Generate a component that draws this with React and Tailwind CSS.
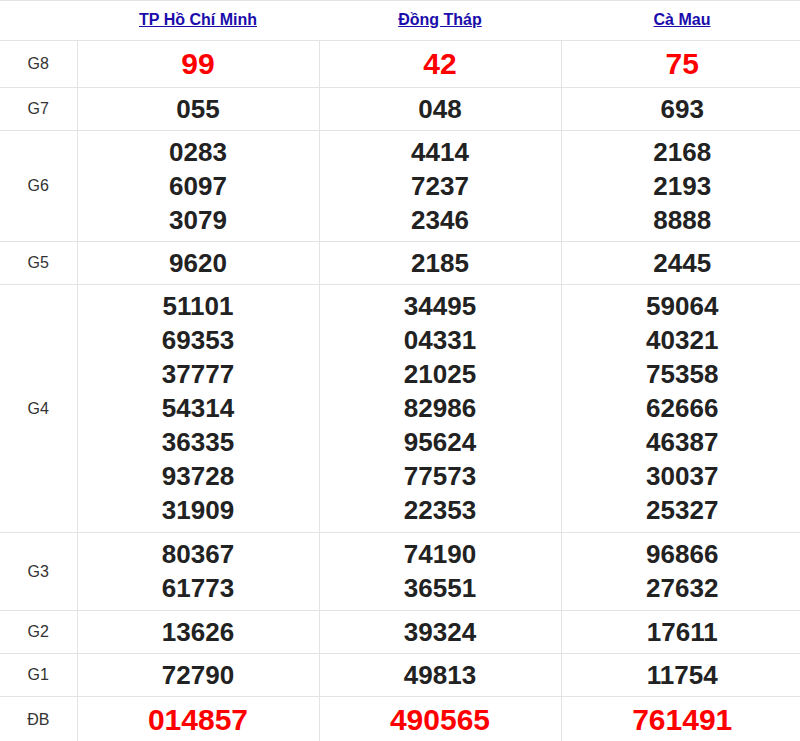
import React from "react";

const provinces = ["TP Hồ Chí Minh", "Đồng Tháp", "Cà Mau"];

const prizes = [
  { label: "G8", red: true, values: [["99"], ["42"], ["75"]] },
  { label: "G7", values: [["055"], ["048"], ["693"]] },
  {
    label: "G6",
    values: [
      ["0283", "6097", "3079"],
      ["4414", "7237", "2346"],
      ["2168", "2193", "8888"],
    ],
  },
  { label: "G5", values: [["9620"], ["2185"], ["2445"]] },
  {
    label: "G4",
    tall: true,
    values: [
      ["51101", "69353", "37777", "54314", "36335", "93728", "31909"],
      ["34495", "04331", "21025", "82986", "95624", "77573", "22353"],
      ["59064", "40321", "75358", "62666", "46387", "30037", "25327"],
    ],
  },
  {
    label: "G3",
    tall: true,
    values: [
      ["80367", "61773"],
      ["74190", "36551"],
      ["96866", "27632"],
    ],
  },
  { label: "G2", values: [["13626"], ["39324"], ["17611"]] },
  { label: "G1", values: [["72790"], ["49813"], ["11754"]] },
  { label: "ĐB", red: true, values: [["014857"], ["490565"], ["761491"]] },
];

export default function App() {
  return (
    <div className="w-[800px] h-[741px] overflow-hidden bg-white font-['Liberation_Sans',Arial,sans-serif]">
      <table className="w-[803px] table-fixed border-collapse">
        <colgroup>
          <col className="w-[77px]" />
          <col className="w-[242px]" />
          <col className="w-[242px]" />
          <col className="w-[242px]" />
        </colgroup>
        <thead>
          <tr className="h-[40px] border-t border-b border-[#e3e3e3]">
            <th></th>
            {provinces.map((p) => (
              <th key={p} className="text-center align-middle pb-[1px]">
                <a
                  href="#"
                  className="text-[16px] font-bold text-[#1a0dab] underline"
                >
                  {p}
                </a>
              </th>
            ))}
          </tr>
        </thead>
        <tbody>
          {prizes.map((row) => (
            <tr key={row.label} className="border-b border-[#e3e3e3]">
              <td className="text-center align-middle text-[16px] text-[#333]">
                {row.label}
              </td>
              {row.values.map((nums, i) => (
                <td
                  key={i}
                  className={`border-l border-[#e3e3e3] text-center align-middle ${
                    row.tall ? "pt-[4px] pb-[5px]" : "py-[4px]"
                  }`}
                >
                  {nums.map((n, j) => (
                    <div
                      key={j}
                      className={
                        row.red
                          ? "text-[30px] leading-[38px] font-bold text-[#ff0000]"
                          : "text-[26px] leading-[34px] font-bold text-[#222]"
                      }
                    >
                      {n}
                    </div>
                  ))}
                </td>
              ))}
            </tr>
          ))}
        </tbody>
      </table>
    </div>
  );
}
